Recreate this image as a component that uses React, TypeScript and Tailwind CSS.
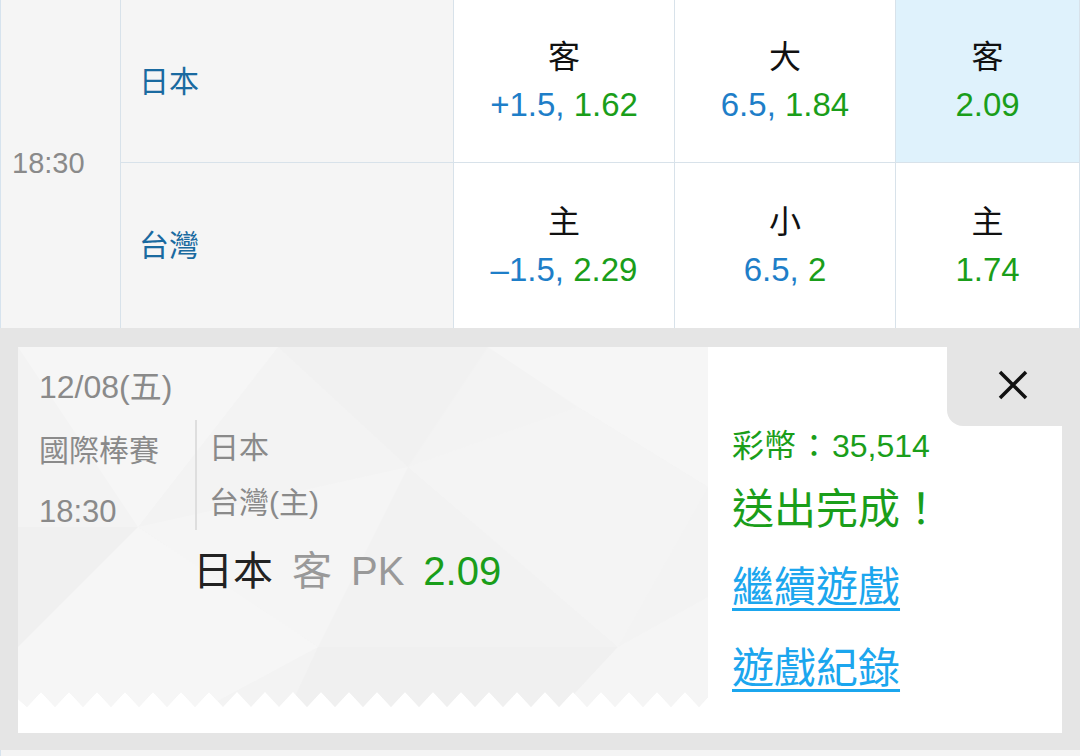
import React from "react";

const font = { fontFamily: '"Liberation Sans", "Noto Sans CJK TC", sans-serif' };

// zigzag bottom edge of the ticket, gray teeth pointing down
function ticketShape() {
  const pts: string[] = ["0,0", "690,0"];
  const edge: string[] = [];
  for (let x = 9, i = 0; x <= 700; x += 14, i++) {
    edge.push(`${x},${i % 2 === 0 ? 360 : 345}`);
  }
  edge.reverse();
  return [...pts, "690,352", ...edge, "0,352"].join(" ");
}

function TicketBg() {
  return (
    <svg className="absolute inset-0" width="690" height="386" viewBox="0 0 690 386">
      <defs>
        <clipPath id="tk">
          <polygon points={ticketShape()} />
        </clipPath>
      </defs>
      <rect width="690" height="386" fill="#ffffff" />
      <g clipPath="url(#tk)">
        <rect width="690" height="386" fill="#f3f3f3" />
        <polygon points="0,0 260,0 120,180" fill="#f6f6f6" />
        <polygon points="260,0 470,0 390,120" fill="#f1f1f1" />
        <polygon points="470,0 690,0 690,140 560,60" fill="#f6f6f6" />
        <polygon points="120,180 390,120 300,300" fill="#f5f5f5" />
        <polygon points="0,180 120,180 0,300" fill="#f0f0f0" />
        <polygon points="390,120 560,60 690,140 600,300" fill="#f4f4f4" />
        <polygon points="300,300 600,300 520,386 260,386" fill="#f0f0f0" />
        <polygon points="0,300 120,180 300,300 140,386 0,386" fill="#f6f6f6" />
        <polygon points="600,300 690,250 690,386 520,386" fill="#f5f5f5" />
        <polygon points="390,120 600,300 300,300" fill="#f2f2f2" />
      </g>
    </svg>
  );
}

function OddsCell({ label, line, odds, hl }: { label: string; line?: string; odds: string; hl?: boolean }) {
  return (
    <div className={`flex flex-col items-center justify-center leading-[48px] border-r border-[#d8e2ea] ${hl ? "bg-[#dff2fc]" : "bg-white"}`}>
      <span className="text-[32px] text-[#111]">{label}</span>
      <span className="text-[33px]">
        {line && <span className="text-[#1e7ec8]">{line}, </span>}
        <span className="text-[#1a9e1a]">{odds}</span>
      </span>
    </div>
  );
}

export default function App() {
  return (
    <div className="w-[1080px] h-[756px] overflow-hidden bg-[#e5e5e5]" style={font}>
      {/* odds table */}
      <div className="grid grid-cols-[120px_333px_221px_221px_1fr] grid-rows-[163px_165px] border-l border-[#d6e3ee]">
        <div className="row-span-2 flex items-center pl-[11px] bg-[#f5f5f5] border-r border-[#d8e2ea] text-[29px] text-[#8a8a8a]">
          18:30
        </div>
        <div className="flex items-center pl-[18px] bg-[#f5f5f5] border-r border-b border-[#d8e2ea] text-[30px] text-[#1a6aa0]">
          日本
        </div>
        <div className="grid border-b border-[#d8e2ea]"><OddsCell label="客" line="+1.5" odds="1.62" /></div>
        <div className="grid border-b border-[#d8e2ea]"><OddsCell label="大" line="6.5" odds="1.84" /></div>
        <div className="grid border-b border-[#d8e2ea]"><OddsCell label="客" odds="2.09" hl /></div>
        <div className="flex items-center pl-[18px] bg-[#f5f5f5] border-r border-[#d8e2ea] text-[30px] text-[#1a6aa0]">
          台灣
        </div>
        <OddsCell label="主" line="–1.5" odds="2.29" />
        <OddsCell label="小" line="6.5" odds="2" />
        <OddsCell label="主" odds="1.74" />
      </div>

      {/* bet slip */}
      <div className="pt-[19px] px-[18px]">
        <div className="relative flex h-[386px] bg-white">
          <div className="relative w-[690px] h-full">
            <TicketBg />
            <div className="relative pt-[21px] pl-[21px] text-[#8a8a8a]">
              <div className="text-[32px] leading-[38px]">12/08(五)</div>
              <div className="flex mt-[14px]">
                <div className="flex flex-col w-[156px] text-[30px]">
                  <span className="leading-[38px] mt-[12px]">國際棒賽</span>
                  <span className="leading-[38px] mt-[23px] text-[31px]">18:30</span>
                </div>
                <div className="w-[2px] h-[110px] bg-[#dedede]" />
                <div className="flex flex-col pl-[12px] text-[30px]">
                  <span className="leading-[38px] mt-[9px]">日本</span>
                  <span className="leading-[38px] mt-[17px]">台灣(主)</span>
                </div>
              </div>
              <div className="pl-[154px] mt-[15px] text-[40px] leading-[50px] flex gap-[19px]">
                <span className="text-[#222]">日本</span>
                <span className="text-[#999]">客</span>
                <span className="text-[#999]">PK</span>
                <span className="text-[#1a9e1a]">2.09</span>
              </div>
            </div>
          </div>

          <div className="flex flex-col pl-[24px] pt-[79px]">
            <div className="text-[32px] leading-[40px] text-[#1a9e1a]">
              彩幣<span className="inline-block w-[36px] text-center">：</span>35,514
            </div>
            <div className="text-[42px] leading-[52px] mt-[18px] text-[#1a9e1a]">
              送出完成<span className="inline-block w-[42px] text-center">！</span>
            </div>
            <a className="text-[42px] leading-[52px] mt-[26px] text-[#1ba6ee] underline underline-offset-[6px] decoration-[3px] self-start">繼續遊戲</a>
            <a className="text-[42px] leading-[52px] mt-[29px] text-[#1ba6ee] underline underline-offset-[6px] decoration-[3px] self-start">遊戲紀錄</a>
          </div>

          {/* close tab */}
          <div className="absolute top-0 -right-[18px] w-[133px] h-[79px] bg-[#e5e5e5] rounded-bl-[16px] flex items-start pt-[23px] pl-[51px]">
            <svg width="30" height="30" viewBox="0 0 30 30">
              <path d="M2 2 L28 28 M28 2 L2 28" stroke="#111" strokeWidth="3.5" strokeLinecap="butt" />
            </svg>
          </div>
        </div>
      </div>
      <div className="mt-[17px] h-[6px] bg-[#f4f4f4] border-l border-[#d6e3ee]" />
    </div>
  );
}
